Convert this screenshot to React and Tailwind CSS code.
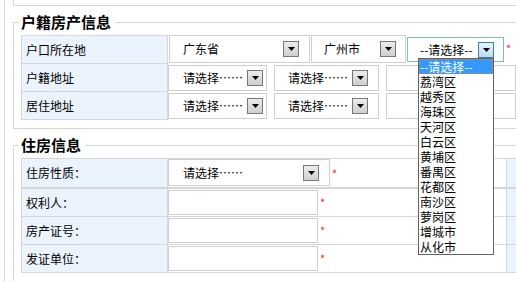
import React from "react";

const districts = [
  "荔湾区",
  "越秀区",
  "海珠区",
  "天河区",
  "白云区",
  "黄埔区",
  "番禺区",
  "花都区",
  "南沙区",
  "萝岗区",
  "增城市",
  "从化市",
];

function Arrow({ focus }) {
  return (
    <span
      className={
        focus
          ? "flex h-[16px] w-[16px] shrink-0 items-center justify-center border border-[#3c7fb1] bg-gradient-to-b from-[#e8f3fc] to-[#bcdcf6]"
          : "flex h-[16px] w-[16px] shrink-0 items-center justify-center border border-[#777777] bg-gradient-to-b from-[#ececec] to-[#cfcfcf]"
      }
    >
      <svg width="7" height="4" viewBox="0 0 7 4">
        <path d="M0 0h7L3.5 4z" fill="#000" />
      </svg>
    </span>
  );
}

function Star({ className = "" }) {
  return <span className={`text-[11px] leading-none text-[#ff2020] ${className}`}>*</span>;
}

function Label({ children, last }) {
  return (
    <div
      className={`flex w-[147px] shrink-0 items-center border-x border-t border-[#d6d6d6] bg-[#eaf3fe] pl-[4px] ${
        last ? "border-b" : ""
      }`}
    >
      {children}
    </div>
  );
}

export default function App() {
  return (
    <div
      lang="zh-CN"
      className="relative h-[281px] w-[516px] overflow-hidden bg-white text-[12px] text-black font-['Noto_Sans_CJK_SC','Noto_Sans',sans-serif]"
    >
      <div className="ml-[4px] h-full border-l border-[#d6d6d6] pl-[8px]">
        {/* tail of the block above */}
        <div className="h-[6px] w-[520px] border-b border-l border-[#d6d6d6]" />

        {/* 户籍房产信息 */}
        <fieldset className="mt-[7px] w-[520px] border border-[#d6d6d6] pb-[8px]">
          <legend className="ml-[5px] pl-[2px] pr-[4px] text-[15px] font-bold leading-[18px]">户籍房产信息</legend>
          <div className="ml-[7px] mt-[4px]">
            <div className="flex h-[28px]">
              <Label>户口所在地</Label>
              <div className="ml-[1px] flex h-[28px] w-[141px] items-center justify-between border border-[#cfcfcf] pl-[13px] pr-[10px]">
                <span>广东省</span>
                <Arrow />
              </div>
              <div className="ml-[1px] flex h-[28px] w-[95px] items-center justify-between border border-[#cfcfcf] pl-[12px] pr-[9px]">
                <span>广州市</span>
                <Arrow />
              </div>
              <div className="ml-[1px] mt-[2px] flex h-[25px] w-[97px] items-center justify-between border border-[#7eb4ea] pl-[12px] pr-[9px]">
                <span>--请选择--</span>
                <Arrow focus />
              </div>
              <Star className="ml-[2px] mt-[8px]" />
            </div>
            {["户籍地址", "居住地址"].map((t, i) => (
              <div key={t} className={i === 1 ? "flex h-[29px]" : "flex h-[28px]"}>
                <Label last={i === 1}>{t}</Label>
                <div className="mt-[2px] flex h-[26px] w-[99px] items-center justify-between border border-[#cfcfcf] pl-[14px] pr-[3px]">
                  <span>请选择……</span>
                  <Arrow />
                </div>
                <div className="ml-[7px] mt-[2px] flex h-[26px] w-[105px] items-center justify-between border border-[#cfcfcf] pl-[13px] pr-[10px]">
                  <span>请选择……</span>
                  <Arrow />
                </div>
                <div className="ml-[7px] mt-[2px] h-[26px] w-[130px] border border-[#cfcfcf]" />
              </div>
            ))}
          </div>
        </fieldset>

        {/* 住房信息 */}
        <fieldset className="mt-[7px] w-[520px] border border-[#d6d6d6] pb-[8px]">
          <legend className="ml-[5px] pl-[2px] pr-[4px] text-[15px] font-bold leading-[18px]">住房信息</legend>
          <div className="ml-[7px] mt-[4px]">
            <div className="flex h-[30px] border-y border-[#d6d6d6]">
              <div className="flex w-[147px] shrink-0 items-center border-x border-[#d6d6d6] bg-[#eaf3fe] pl-[4px]">
                住房性质：
              </div>
              <div className="flex w-[338px] items-start">
                <div className="flex h-[27px] w-[162px] items-center justify-between border border-[#cfcfcf] pl-[14px] pr-[10px]">
                  <span>请选择……</span>
                  <Arrow />
                </div>
                <Star className="ml-[2px] mt-[9px]" />
              </div>
              <div className="w-[20px] border-l border-[#d6d6d6] bg-[#eaf3fe]" />
            </div>
            {["权利人：", "房产证号：", "发证单位："].map((t, i) => (
              <div
                key={t}
                className={
                  i === 2
                    ? "flex h-[29px] border-y border-[#d6d6d6]"
                    : "flex h-[28px] border-t border-[#d6d6d6]"
                }
              >
                <div className="flex w-[147px] shrink-0 items-center border-x border-[#d6d6d6] bg-[#eaf3fe] pl-[4px]">
                  {t}
                </div>
                <div className="flex w-[338px] items-start">
                  <div className="mt-[1px] h-[25px] w-[150px] border border-[#cfcfcf]" />
                  <Star className="ml-[2px] mt-[8px]" />
                </div>
                <div className="w-[20px] border-l border-[#d6d6d6] bg-[#eaf3fe]" />
              </div>
            ))}
          </div>
        </fieldset>
      </div>

      {/* open drop-down list of the district select */}
      <div className="absolute left-[418px] top-[58px] w-[76px] border border-[#646464] bg-white text-[12px] leading-[15px]">
        <div className="bg-[#3399ff] pl-[1px] text-white outline-1 outline-dotted -outline-offset-1 outline-[#d0804a]">--请选择--</div>
        {districts.map((d) => (
          <div key={d} className="pl-[1px]">
            {d}
          </div>
        ))}
      </div>
    </div>
  );
}
